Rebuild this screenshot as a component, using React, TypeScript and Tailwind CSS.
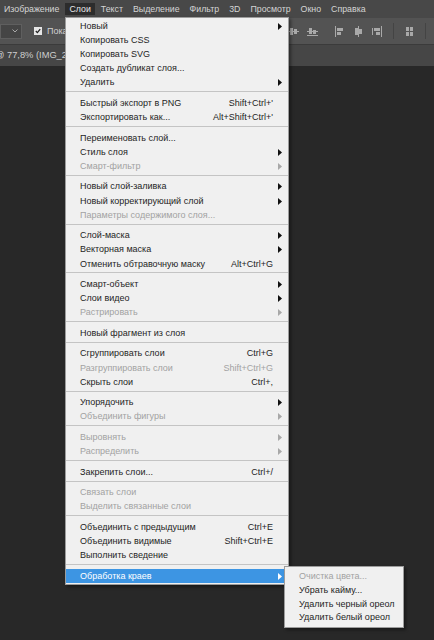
import React from "react";

type Item = {
  label: string;
  keys?: string;
  sub?: boolean;
  disabled?: boolean;
  active?: boolean;
};

const groups: Item[][] = [
  [
    { label: "Новый", sub: true },
    { label: "Копировать CSS" },
    { label: "Копировать SVG" },
    { label: "Создать дубликат слоя..." },
    { label: "Удалить", sub: true },
  ],
  [
    { label: "Быстрый экспорт в PNG", keys: "Shift+Ctrl+'" },
    { label: "Экспортировать как...", keys: "Alt+Shift+Ctrl+'" },
  ],
  [
    { label: "Переименовать слой..." },
    { label: "Стиль слоя", sub: true },
    { label: "Смарт-фильтр", sub: true, disabled: true },
  ],
  [
    { label: "Новый слой-заливка", sub: true },
    { label: "Новый корректирующий слой", sub: true },
    { label: "Параметры содержимого слоя...", disabled: true },
  ],
  [
    { label: "Слой-маска", sub: true },
    { label: "Векторная маска", sub: true },
    { label: "Отменить обтравочную маску", keys: "Alt+Ctrl+G" },
  ],
  [
    { label: "Смарт-объект", sub: true },
    { label: "Слои видео", sub: true },
    { label: "Растрировать", sub: true, disabled: true },
  ],
  [{ label: "Новый фрагмент из слоя" }],
  [
    { label: "Сгруппировать слои", keys: "Ctrl+G" },
    { label: "Разгруппировать слои", keys: "Shift+Ctrl+G", disabled: true },
    { label: "Скрыть слои", keys: "Ctrl+," },
  ],
  [
    { label: "Упорядочить", sub: true },
    { label: "Объединить фигуры", sub: true, disabled: true },
  ],
  [
    { label: "Выровнять", sub: true, disabled: true },
    { label: "Распределить", sub: true, disabled: true },
  ],
  [{ label: "Закрепить слои...", keys: "Ctrl+/" }],
  [
    { label: "Связать слои", disabled: true },
    { label: "Выделить связанные слои", disabled: true },
  ],
  [
    { label: "Объединить с предыдущим", keys: "Ctrl+E" },
    { label: "Объединить видимые", keys: "Shift+Ctrl+E" },
    { label: "Выполнить сведение" },
  ],
  [{ label: "Обработка краев", sub: true, active: true }],
];

const topMenu = ["Изображение", "Слои", "Текст", "Выделение", "Фильтр", "3D", "Просмотр", "Окно", "Справка"];

const edgeItems = [
  { label: "Очистка цвета...", disabled: true },
  { label: "Убрать кайму..." },
  { label: "Удалить черный ореол" },
  { label: "Удалить белый ореол" },
];

function Arrow({ className }: { className: string }) {
  return (
    <svg width="4" height="7" viewBox="0 0 4 7" className={className}>
      <path d="M0 0 L4 3.5 L0 7 Z" fill="currentColor" />
    </svg>
  );
}

function MenuRow({ item }: { item: Item }) {
  const color = item.active ? "text-white" : item.disabled ? "text-[#a2a2a2]" : "text-[#1e1e1e]";
  return (
    <div className={`flex h-[14.2px] items-center pl-[14px] ${item.active ? "bg-[#3d95e3]" : ""} ${color}`}>
      <span className="flex-1 whitespace-nowrap">{item.label}</span>
      {item.keys && <span className="whitespace-nowrap">{item.keys}</span>}
      <span className="flex w-[15px] shrink-0 pl-[5px]">
        {item.sub && <Arrow className={item.active ? "text-white" : item.disabled ? "text-[#a8a8a8]" : "text-[#111]"} />}
      </span>
    </div>
  );
}

function AlignIcon({ kind }: { kind: string }) {
  const c = "#a9a9a9";
  return (
    <svg width="11" height="11" viewBox="0 0 11 11">
      {kind === "vcenter" && (
        <>
          <rect x="0" y="5" width="11" height="1" fill={c} />
          <rect x="2" y="2" width="3" height="7" fill={c} />
          <rect x="6" y="3" width="3" height="5" fill={c} />
        </>
      )}
      {kind === "bottom" && (
        <>
          <rect x="0" y="9" width="11" height="1" fill={c} />
          <rect x="2" y="2" width="3" height="6" fill={c} />
          <rect x="6" y="4" width="3" height="4" fill={c} />
          <rect x="0" y="5" width="11" height="1" fill={c} />
        </>
      )}
      {kind === "left" && (
        <>
          <rect x="1" y="0" width="1" height="11" fill={c} />
          <rect x="3" y="2" width="6" height="3" fill={c} />
          <rect x="3" y="6" width="4" height="3" fill={c} />
        </>
      )}
      {kind === "hcenter" && (
        <>
          <rect x="5" y="0" width="1" height="11" fill={c} />
          <rect x="2" y="2" width="3" height="7" fill={c} />
          <rect x="6" y="3" width="3" height="5" fill={c} />
        </>
      )}
      {kind === "right" && (
        <>
          <rect x="9" y="0" width="1" height="11" fill={c} />
          <rect x="2" y="2" width="6" height="3" fill={c} />
          <rect x="4" y="6" width="4" height="3" fill={c} />
          <rect x="0" y="2" width="1" height="7" fill={c} />
        </>
      )}
      {kind === "dist" && (
        <>
          <rect x="2" y="1" width="3" height="4" fill={c} />
          <rect x="6" y="1" width="3" height="4" fill={c} />
          <rect x="2" y="6" width="3" height="4" fill={c} />
          <rect x="6" y="6" width="3" height="4" fill={c} />
        </>
      )}
    </svg>
  );
}

export default function App() {
  return (
    <div className="relative h-[640px] w-[434px] overflow-hidden bg-[#282828] font-['Liberation_Sans',Arial,sans-serif] text-[9px] leading-none">
      {/* menu bar */}
      <div className="flex h-[18px] items-center gap-[2px] bg-[#484848] text-[8.8px] text-[#d4d4d4]">
        {topMenu.map((m) => (
          <span
            key={m}
            className={`flex h-[12px] items-center px-[4px] ${m === "Слои" ? "bg-[#2c2c2c] text-[#e8e8e8]" : ""}`}
          >
            {m}
          </span>
        ))}
      </div>

      {/* options bar */}
      <div className="flex h-[27px] items-center border-b border-[#3b3b3b] bg-[#535353]">
        <div className="flex h-[15px] w-[22px] items-center justify-end border border-[#5f5f5f] bg-[#454545] pr-[3px]">
          <svg width="6" height="4" viewBox="0 0 6 4">
            <path d="M0.5 0.5 L3 3 L5.5 0.5" stroke="#a8a8a8" fill="none" />
          </svg>
        </div>
        <div className="ml-[12px] flex h-[8px] w-[8px] items-center justify-center bg-[#e6e6e6]">
          <svg width="6" height="6" viewBox="0 0 6 6">
            <path d="M0.8 3 L2.4 4.6 L5.2 1.2" stroke="#222" strokeWidth="1.3" fill="none" />
          </svg>
        </div>
        <span className="ml-[5px] whitespace-nowrap text-[#d0d0d0]">Показать элементы управления</span>
        <div className="ml-auto flex items-center">
          <div className="flex items-center gap-[8px]">
            <AlignIcon kind="vcenter" />
            <AlignIcon kind="bottom" />
          </div>
          <div className="ml-[16px] flex items-center gap-[8px]">
            <AlignIcon kind="left" />
            <AlignIcon kind="hcenter" />
            <AlignIcon kind="right" />
          </div>
          <div className="mx-[10px] h-[16px] w-px bg-[#444]" />
          <AlignIcon kind="dist" />
          <div className="ml-[10px] mr-[8px] h-[16px] w-px bg-[#444]" />
        </div>
      </div>

      {/* document tab */}
      <div className="flex h-[21px] items-center overflow-hidden bg-[#464646] text-[9.3px] text-[#cfcfcf]">
        <span className="-ml-[5px] whitespace-nowrap">@ 77,8% (IMG_2005.JPG, RGB/8)</span>
      </div>

      {/* Layer menu */}
      <div className="absolute left-[65px] top-[17px] w-[224px] border border-[#9c9c9c] bg-[#f0f0f0] py-px shadow-[2px_2px_3px_rgba(0,0,0,0.4)]">
        {groups.map((g, gi) => (
          <div key={gi}>
            {gi > 0 && <div className="mb-[4px] mt-[1.3px] h-px bg-[#c4c4c4]" />}
            {g.map((it) => (
              <MenuRow key={it.label} item={it} />
            ))}
          </div>
        ))}
      </div>

      {/* Edges submenu */}
      <div className="absolute left-[284px] top-[566px] w-[120px] border border-[#9c9c9c] bg-[#f0f0f0] pb-[2px] pt-[3px] shadow-[2px_2px_3px_rgba(0,0,0,0.4)]">
        {edgeItems.map((it) => (
          <div
            key={it.label}
            className={`flex h-[13.7px] items-center whitespace-nowrap pl-[14px] ${it.disabled ? "text-[#a2a2a2]" : "text-[#1e1e1e]"}`}
          >
            {it.label}
          </div>
        ))}
      </div>
    </div>
  );
}
